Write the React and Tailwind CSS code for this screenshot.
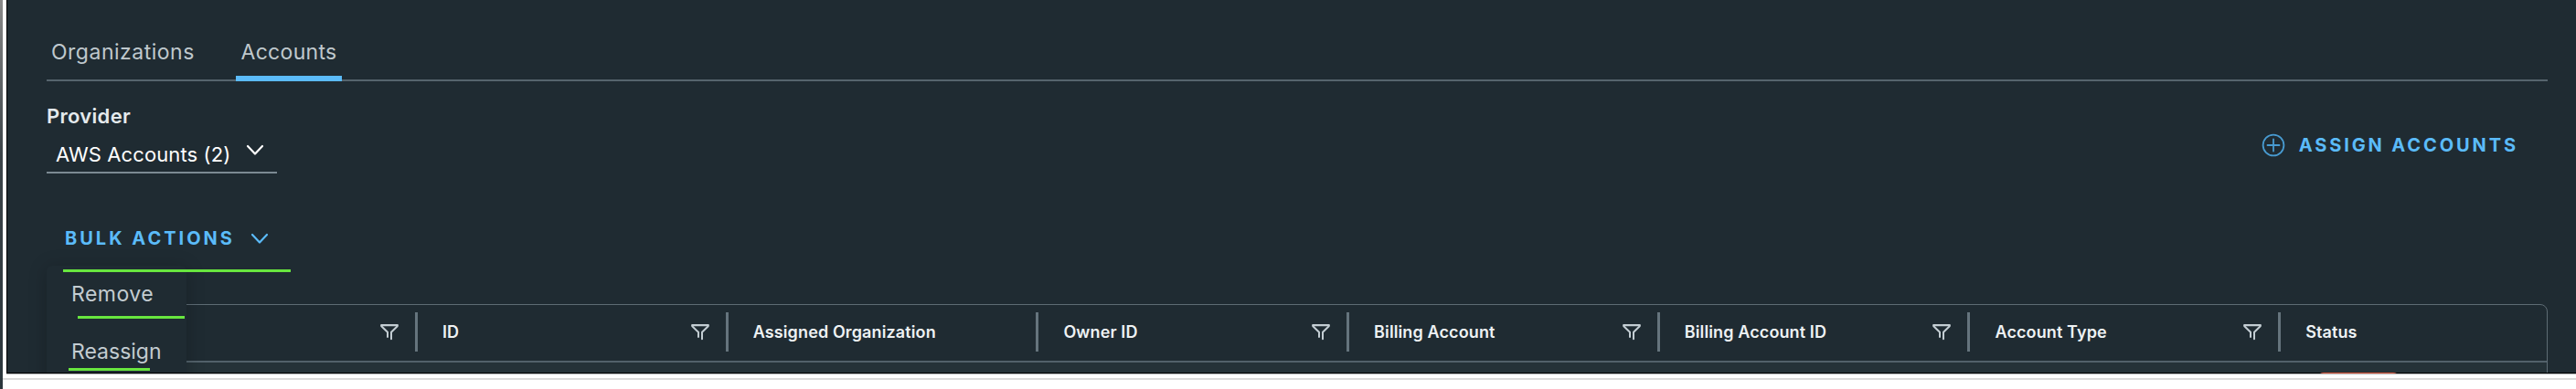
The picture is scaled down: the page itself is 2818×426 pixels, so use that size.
const Funnel = () => (
  <svg className="mt-px block h-[20px] w-[22px] shrink-0" viewBox="0 0 22 20" fill="none" stroke="#c3cdd3" strokeWidth="2" strokeLinejoin="round" strokeLinecap="round">
    <path d="M9 15V9.8L2.3 3.2V2h17.4v1.2L13 9.8v7.4" />
    <path d="M2.3 2.2h17.4" />
  </svg>
);

const Chevron = ({ className }) => (
  <svg className={className} viewBox="0 0 20 13" fill="none" stroke="currentColor" strokeWidth="2.2" strokeLinecap="round" strokeLinejoin="round">
    <path d="M2 2l8 8.5L18 2" />
  </svg>
);

const columns = [
  { name: "", filter: true },
  { name: "ID", filter: true },
  { name: "Assigned Organization", filter: false },
  { name: "Owner ID", filter: true },
  { name: "Billing Account", filter: true },
  { name: "Billing Account ID", filter: true },
  { name: "Account Type", filter: true },
  { name: "Status", filter: false },
];

const cellClass = (i) => {
  if (i === 0) return "flex h-[43px] w-[405px] items-center justify-between border-r-[3px] border-[#65747d] pr-[17px]";
  if (i === columns.length - 1) return "flex h-[43px] w-[290px] items-center pl-[27px]";
  return "flex h-[43px] w-[339.7px] items-center justify-between border-r-[3px] border-[#65747d] pr-[17px] pl-[27px]";
};

export default function App() {
  return (
    <div className="flex h-[426px] w-[2818px] overflow-hidden bg-white font-['Inter',sans-serif]">
      <div className="w-[3px] shrink-0 bg-linear-to-b from-[#8a8a8a] via-[#3c4449] via-40% to-[#2b363c]" />
      <div className="w-[4px] shrink-0 bg-white" />
      <div className="flex min-w-0 grow flex-col">
        <main className="relative flex h-[409px] flex-col overflow-hidden border-l border-black bg-[#1f2b32] pr-[31px] pl-[43px]">
          <nav className="flex h-[89px] shrink-0 items-end border-b-2 border-[#56646d] text-[#bfc8cd]">
            <button className="mb-[13px] w-[207px] pl-[5px] text-left text-[23px] leading-[34px] tracking-[0.5px]">Organizations</button>
            <button className="-mb-[2px] h-[49px] w-[116px] border-b-[6px] border-[#5bbbf9] pb-[9px] text-center text-[23px] leading-[34px] tracking-[0.3px]">Accounts</button>
          </nav>
          <section className="flex h-[128px] shrink-0 justify-between">
            <div className="w-[252px] pt-[21px]">
              <div className="text-[22px] leading-[34px] font-semibold tracking-[0.3px] text-[#e4eaed]">Provider</div>
              <div className="mt-[7px] flex h-[39px] items-start justify-between border-b-2 border-[#7b8a93] pr-[14px] pl-[10px] text-[22px] leading-[36px] tracking-[0.1px] text-white">
                <span>AWS Accounts (2)</span>
                <Chevron className="mt-[7px] h-[13px] w-[20px]" />
              </div>
            </div>
            <button className="mt-[50px] flex h-[40px] items-center pr-[32px] text-[#5bbbf9]">
              <svg className="mr-[15px] h-[26px] w-[26px]" viewBox="0 0 26 26" fill="none" stroke="#489bd1" strokeWidth="1.8" strokeLinecap="round">
                <circle cx="13" cy="13" r="11.4" />
                <path d="M13 6.5v13M6.5 13h13" />
              </svg>
              <span className="text-[20px] font-bold tracking-[2.9px]">ASSIGN ACCOUNTS</span>
            </button>
          </section>
          <button className="mt-[27px] flex h-[34px] shrink-0 items-center pl-[20px] text-[#5bbbf9]">
            <span className="text-[20px] font-bold tracking-[3px]">BULK ACTIONS</span>
            <Chevron className="ml-[17px] h-[13px] w-[20px]" />
          </button>
          <div className="mt-[55px] flex h-[120px] shrink-0 flex-col rounded-lg border border-[#5d6b74]">
            <div className="flex h-[63px] shrink-0 items-center border-b-2 border-[#52616a] pb-[2px]">
              {columns.map((c, i) => (
                <div key={i} className={cellClass(i)}>
                  <span className="text-[18px] leading-[24px] font-semibold tracking-[0.12px] whitespace-nowrap text-[#eef2f4]">{c.name}</span>
                  {c.filter && <Funnel />}
                </div>
              ))}
            </div>
            <div className="grow bg-[#253238] pl-[2482px]">
              <div className="relative z-10 mt-[11px] h-[20px] w-[92px] rounded-lg bg-[#e0573a]" />
            </div>
          </div>
          <div className="absolute top-[291px] left-[43px] h-[140px] w-[153px] rounded-md bg-[#1f2b32] pl-[27px] text-[23px] text-[#c3ccd1] shadow-[0_2px_20px_rgba(0,0,0,0.22)]">
            <div className="pt-[13px] leading-[36px] tracking-[0.5px]">Remove</div>
            <div className="pt-[27px] leading-[36px]">Reassign</div>
          </div>
          <div className="absolute top-[295px] left-[61px] h-[3px] w-[249px] bg-[#68e63f]" />
          <div className="absolute top-[346px] left-[77px] h-[3px] w-[117px] bg-[#68e63f]" />
          <div className="absolute top-[403px] left-[67px] h-[3px] w-[89px] bg-[#68e63f]" />
          <div className="absolute bottom-0 left-0 h-px w-full bg-black" />
        </main>
        <div className="h-px shrink-0 bg-[#a9adb0]" />
        <div className="mt-[4px] -ml-[4px] h-[2px] shrink-0 bg-[#dadada]" />
      </div>
    </div>
  );
}
